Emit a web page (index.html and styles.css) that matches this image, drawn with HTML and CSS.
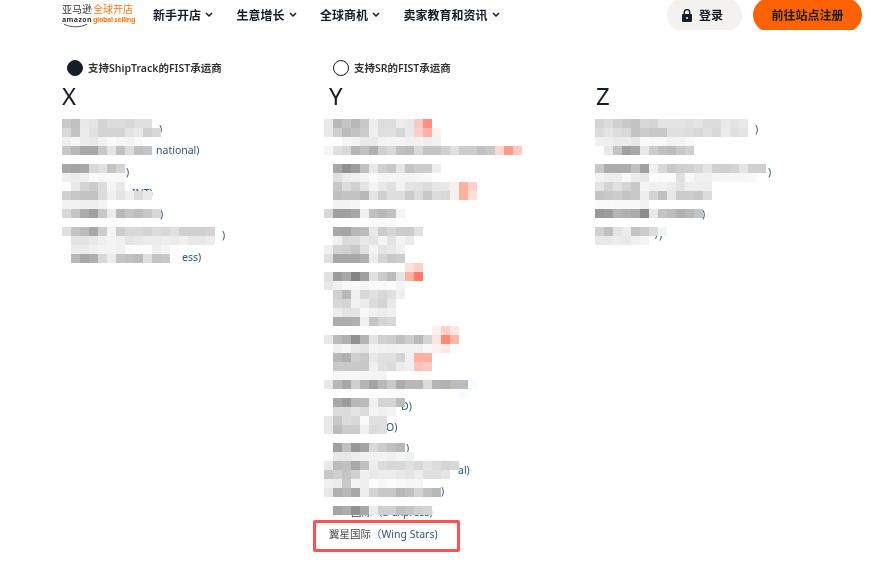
FILE: index.html
```html
<!DOCTYPE html>
<html lang="zh-CN">
<head>
    <meta charset="UTF-8">
    <meta name="viewport" content="width=device-width, initial-scale=1.0">
    <title>FIST承运商</title>
    <link rel="stylesheet" href="styles.css">
</head>
<body>
    <header>
        <div class="logo">
            <div class="logo-line logo-top">
                <span class="logo-cn">亚马逊</span><span class="logo-cn orange">全球开店</span>
            </div>
            <div class="logo-line">
                <span class="logo-en">amazon</span><span class="logo-en orange">global selling</span>
            </div>
            <svg class="logo-smile" viewBox="0 0 30 5">
                <path d="M1 1c8 4 19 4 27 0" fill="none" stroke="#333" stroke-width="1"/>
            </svg>
        </div>
        <nav>
            <a href="#">新手开店<svg class="chev" viewBox="0 0 8 6"><path d="M1 1l3 3 3-3" /></svg></a>
            <a href="#">生意增长<svg class="chev" viewBox="0 0 8 6"><path d="M1 1l3 3 3-3" /></svg></a>
            <a href="#">全球商机<svg class="chev" viewBox="0 0 8 6"><path d="M1 1l3 3 3-3" /></svg></a>
            <a href="#">卖家教育和资讯<svg class="chev" viewBox="0 0 8 6"><path d="M1 1l3 3 3-3" /></svg></a>
        </nav>
        <div class="auth">
            <button class="login-btn">
                <svg class="lock" viewBox="0 0 10 13">
                    <path d="M2.2 5V3.4a2.8 2.8 0 0 1 5.6 0V5" fill="none" stroke="#161d26" stroke-width="1.4"/>
                    <path d="M1 5h8a1 1 0 0 1 1 1v6a1 1 0 0 1-1 1H1a1 1 0 0 1-1-1V6a1 1 0 0 1 1-1z" fill="#161d26"/>
                    <circle cx="5" cy="9" r="1" fill="#f3f2ef"/>
                </svg>
                登录
            </button>
            <button class="signup-btn">前往站点注册</button>
        </div>
    </header>

    <main>
        <div class="filters">
            <div class="filter"><span class="radio checked"></span>支持ShipTrack的FIST承运商</div>
            <div class="filter"><span class="radio"></span>支持SR的FIST承运商</div>
        </div>
        <div class="columns">
            <section class="column">
                <h2>X</h2>
                <div class="carriers" id="colX"></div>
            </section>
            <section class="column">
                <h2>Y</h2>
                <div class="carriers" id="colY"></div>
            </section>
            <section class="column">
                <h2>Z</h2>
                <div class="carriers" id="colZ"></div>
            </section>
        </div>
    </main>

    <script src="script.js"></script>
</body>
</html>
```

FILE: styles.css
```css
* {
    margin: 0;
    padding: 0;
    box-sizing: border-box;
}
html, body {
    min-height: 579px;
}
body {
    font-family: "Noto Sans", "Noto Sans CJK SC", sans-serif;
    background-color: white;
    color: #161d26;
}
header {
    display: flex;
    align-items: center;
    height: 30px;
    padding-left: 62px;
    overflow: hidden;
    filter: blur(0.35px);
}
.logo {
    position: relative;
    width: 72px;
    height: 22px;
    margin-right: 19px;
    flex-shrink: 0;
}
.logo-line {
    display: flex;
    white-space: nowrap;
}
.logo-top {
    gap: 1px;
    margin-bottom: 1px;
}
.logo-cn {
    font-size: 10px;
    line-height: 11px;
    color: #333;
}
.logo-en {
    font-size: 7px;
    line-height: 8px;
    font-weight: 700;
    color: #333;
    margin-right: 1px;
    letter-spacing: 0.4px;
}
.logo .orange {
    letter-spacing: -0.3px;
    color: #ff7a1a;
}
.logo .logo-cn.orange {
    letter-spacing: 0;
}
.logo-smile {
    position: absolute;
    left: 1px;
    top: 19px;
    width: 26px;
    height: 5px;
}
nav {
    display: flex;
    gap: 23.5px;
}
nav a {
    display: flex;
    align-items: center;
    gap: 4px;
    text-decoration: none;
    color: inherit;
    font-size: 12px;
    font-weight: 700;
    white-space: nowrap;
}
.chev {
    width: 8px;
    height: 6px;
}
.chev path {
    fill: none;
    stroke: #161d26;
    stroke-width: 1.5;
}
.auth {
    display: flex;
    gap: 11px;
    margin-left: 167.5px;
}
.login-btn, .signup-btn {
    display: flex;
    align-items: center;
    justify-content: center;
    height: 34px;
    border: none;
    border-radius: 17px;
    font-family: inherit;
    font-size: 12px;
    font-weight: 700;
    color: #161d26;
    cursor: pointer;
}
.login-btn {
    width: 75px;
    gap: 7px;
    padding-right: 4px;
    background-color: #f3f2ef;
}
.signup-btn {
    width: 109px;
    background-color: #ff6200;
}
.lock {
    width: 10px;
    height: 13px;
}
main {
    padding-left: 62px;
    filter: blur(0.35px);
}
.filters {
    display: grid;
    grid-template-columns: repeat(3, 267px);
    margin-top: 29px;
}
.filter {
    display: flex;
    align-items: center;
    gap: 5px;
    height: 18px;
    padding-left: 5px;
    font-size: 10.5px;
    font-weight: 600;
    line-height: 16px;
    color: #333;
}
.filter:nth-child(2) {
    padding-left: 4px;
}
.radio {
    width: 16px;
    height: 16px;
    border: 1.5px solid #161d26;
    border-radius: 50%;
}
.radio.checked {
    background-color: #161d26;
}
.columns {
    display: grid;
    grid-template-columns: repeat(3, 267px);
}
.column h2 {
    font-size: 24px;
    font-weight: 400;
    line-height: 32px;
    height: 32px;
    margin-top: 3px;
}
.carriers {
    position: relative;
    margin-top: 7px;
}
.carrier {
    position: relative;
    height: 21.3px;
    line-height: 21.3px;
    font-size: 10.5px;
    color: #2c5578;
    white-space: nowrap;
}
.carrier-name {
    color: #444;
}
/* pixelated cover over the hidden names */
.mosaic {
    position: absolute;
    top: 0;
    left: 0;
}
#colY .mosaic {
    left: -5px;
}
#colZ .mosaic {
    left: -1px;
}
.mosaic-row {
    display: flex;
    height: 9px;
}
.mosaic-row span {
    width: 9px;
    height: 9px;
    flex-shrink: 0;
}
.highlight {
    position: absolute;
    left: -16px;
    top: -4px;
    width: 147px;
    height: 32px;
    border: 3.5px solid #ff5252;
    border-radius: 2px;
}
```

FILE: script.js
```js
// Visible tail of each row, [left offset, text]
const rowsX = [
    [97, ")"], [94, "national)"], [64, ")"], [70, "INT)"], [98, ")"], [160, ")"], [120, "ess)"]
];
const rowsY = [
    [0, ""], [120, "V Shi"], [0, ""], [0, ""], [0, ""], [0, ""], [0, ""], [0, ""],
    [62, "/"], [0, ""], [0, ""], [0, ""], [0, ""],
    [72, "D)"], [57, "O)"], [77, ")"], [129, "al)"], [112, ")"], [22, "国际（E-express)"]
];
const rowsZ = [
    [159, ")"], [0, ""], [172, ")"], [0, ""], [106, ")"], [59, "/)"]
];

// One string per 9px mosaic row, ".." leaves a cell empty, two digits are a grey, six a colour
const mosaicX = [
    "c8 c0 e8 e4 d4 dc dc d8 e0 e0",
    "d8 c4 ec e0 d4 d4 d4 e4 e8 d0 d8",
    "ee f6 ec e8 f2 fa f6 f4 fa",
    "c8 b8 a8 a8 c8 e4 c0 dc c0 c4",
    "",
    "a8 a4 a8 d8 e0 c4 d4",
    "f0 ec f0 fa f6 f8 f8",
    ".. e8 d4 cc dc f4 e8",
    "d0 c8 c4 c4 dc f0 e4 ee dc e8",
    "f2 f2 f0 f0 f4",
    "d8 c4 ac a0 c8 ec b8 c4 bc c8 d8",
    ".. .. .. .. .. fc fc",
    "e0 c4 bc a8 cc f4 cc d8 d8 d4 dc d8 e0 d0 d0 d0 d4",
    ".. e4 e4 e8 f0 f4 f0 e4 e8 ec ec ee ea f0 e8 e8 ec",
    ".. ec ec f0 f4 f4 f0 fc fc fc ee f4 fc",
    ".. b8 a8 b0 d8 ec c4 c0 bc e0 c4 c8"
];
const mosaicY = [
    "e8 b8 c5 b8 c8 ee dd dd ec e8 ffc8c0 ff8f80",
    "e8 cf bb c2 cc f0 e0 e0 d6 e8 ffd0c8 ffb0a8 fff0f0",
    ".. .. f4 f2 e8 ea f2 f5 f4 f2 f2 ee f2",
    "f5 e0 d8 b4 c0 b0 d0 d8 c0 bc d8 c4 c4 d0 e0 cc cc c0 c8 ffd8d0 ff9a88 ffc8c0",
    "",
    ".. a8 90 9c c0 e8 d0 c8 e4 c4 cc cc ee",
    ".. e0 ec f0 f4 fa f6 f6 f4 f4 f6 f8",
    ".. c8 dc d0 e4 f4 e8 e0 f2 e4 e2 dc e6 e8 fdeeea ffb0a0 ffd0c8",
    ".. c0 c4 c4 b8 e4 d0 de de cc dc c8 dc d8 fdeeea ffb0a0 ffe0d8",
    ".. f2 f2 f6",
    "d8 a0 a0 a8 f0 c0 b8 c0 f4",
    ".. .. .. .. .. fa fa fa",
    ".. a8 a4 b8 bc e8 cc d6 cc cc e0",
    ".. f0 dc dc e8 e4 f4 e4 f4 ec",
    "ee d4 d0 c8 e0 f4 e4 e8 f0",
    "e0 a8 a8 a8 b0 ec d4 c8 cc",
    ".. .. .. .. .. .. .. .. .. ffe0da ffd0c8",
    "e0 9c a8 84 a0 e0 cc bc e4 ffb0a0 ff7a68",
    "e8 f0 f8 f8 f4 fa f8 fc f4",
    ".. d0 b8 f0 d8 e0 d8 e0 f0",
    ".. d8 d4 f2 ec dc d4 e8",
    ".. ec e4 e4 fa f0 ec f0",
    ".. ac ac b0 f0 c4 d4 d8",
    ".. .. .. .. .. .. .. .. .. .. .. .. fff0ee ffd0c8 ffe8e4",
    "e8 bc b0 90 b4 e4 d0 cc c0 cc b8 d4 ffe4e0 ff8a78 ffb8a8",
    ".. f0 f6 e8 e4 f4 f2 f0 f2 f2 f2 f8 fff0ee ffe8e4",
    ".. b8 b0 d0 c8 e8 e0 e0 d4 f0 ffb0a0 ffb0a0",
    ".. c8 c8 c8 c8 f0 e0 dc ec f0 ffc0b8 ffc8c0",
    ".. f6 f8 f8 f4 f4 f4",
    "e8 b8 a8 d0 b4 a4 b8 c8 ac b8 b8 dc b4 b0 bc bc f8fbff",
    ".. .. .. .. .. .. .. fa fa .. .. .. .. .. .. f8fbff",
    ".. a8 9c b8 bc f0 d4 d4 bc",
    ".. dc dc e4 dc f4 f0 f4",
    "e8 c8 dc d8 fa e0 e0",
    "e8 bc cc cc f0 dc e0",
    "",
    ".. a0 c0 98 a4 d8 cc c0 b8",
    ".. e8 e8 ec f0 f2 f4 f0 f4 f0",
    "e8 bc c0 a8 c0 ec dc d8 d8 e0 d8 e4 dc d4 d8",
    "c8 d0 c4 d0 f0 e8 ec ec e8 e4 ec e0 e0 e4",
    "f0 ec c8 f4 f0 fc f8 fc f8 f6 f6",
    "e8 b0 b8 a8 ee d4 c8 c8 b8 c0 d4 c0 b8",
    "",
    ".. a4 ac 90 a8 ec d0 d0 c0 c4 d0 d4"
];
const mosaicZ = [
    "d4 dc d0 c8 c4 d8 d4 e4 e4 e4 e0 e4 dc dc e8 e4 e8",
    "dc e4 dc d8 c4 cc c8 c8 e0 e0 dc d8 e0 d8 ec e0 e4",
    "f0 ee ea ec e8 fa f8 f8 f2 f4 f8",
    ".. e8 c4 a0 a8 e8 cc c0 bc c8 d0",
    "",
    "c8 ac ac ac c0 a0 f0 d8 c8 d0 d0 d8 e4 d0 d0 d4 e4 d0 d0",
    "f2 ee ee f8 ec e8 fc fa fa e0 f8 f0 f0 f4 f6 f6 f6 f8",
    "e4 d4 e0 d4 c8 f4 f0 f0 ec e4 ee ee ee",
    "c4 c8 cc c4 c8 ee d4 c0 e8 cc cc c8 dc",
    "fa fa f8 f8 f8 f2",
    "98 9c b4 b0 ac 8c e8 c4 bc b0 b8 c4",
    "",
    "d0 c0 e4 ec c4 cc dc f4",
    "e8 e8 ec e8 f0 f4"
];

function cellColor(token) {
    if (token.length === 2) {
        return "#" + token + token + token;
    }
    return "#" + token;
}

function buildColumn(id, rows, mosaic) {
    const container = document.getElementById(id);

    rows.forEach((row) => {
        const rowElement = document.createElement("div");
        rowElement.className = "carrier";
        rowElement.style.paddingLeft = row[0] + "px";
        rowElement.textContent = row[1];
        container.appendChild(rowElement);
    });

    const cover = document.createElement("div");
    cover.className = "mosaic";
    mosaic.forEach((line) => {
        const lineElement = document.createElement("div");
        lineElement.className = "mosaic-row";
        line.split(" ").forEach((token) => {
            if (!token) return;
            const cell = document.createElement("span");
            if (token !== "..") cell.style.backgroundColor = cellColor(token);
            lineElement.appendChild(cell);
        });
        cover.appendChild(lineElement);
    });
    container.appendChild(cover);
    return container;
}

buildColumn("colX", rowsX, mosaicX);
const colY = buildColumn("colY", rowsY, mosaicY);
buildColumn("colZ", rowsZ, mosaicZ);

// Last row of Y stays readable and gets the red frame
const lastRow = document.createElement("div");
lastRow.className = "carrier";
lastRow.innerHTML = '<span class="carrier-name">翼星国际</span>（Wing Stars)<div class="highlight"></div>';
colY.appendChild(lastRow);
```
